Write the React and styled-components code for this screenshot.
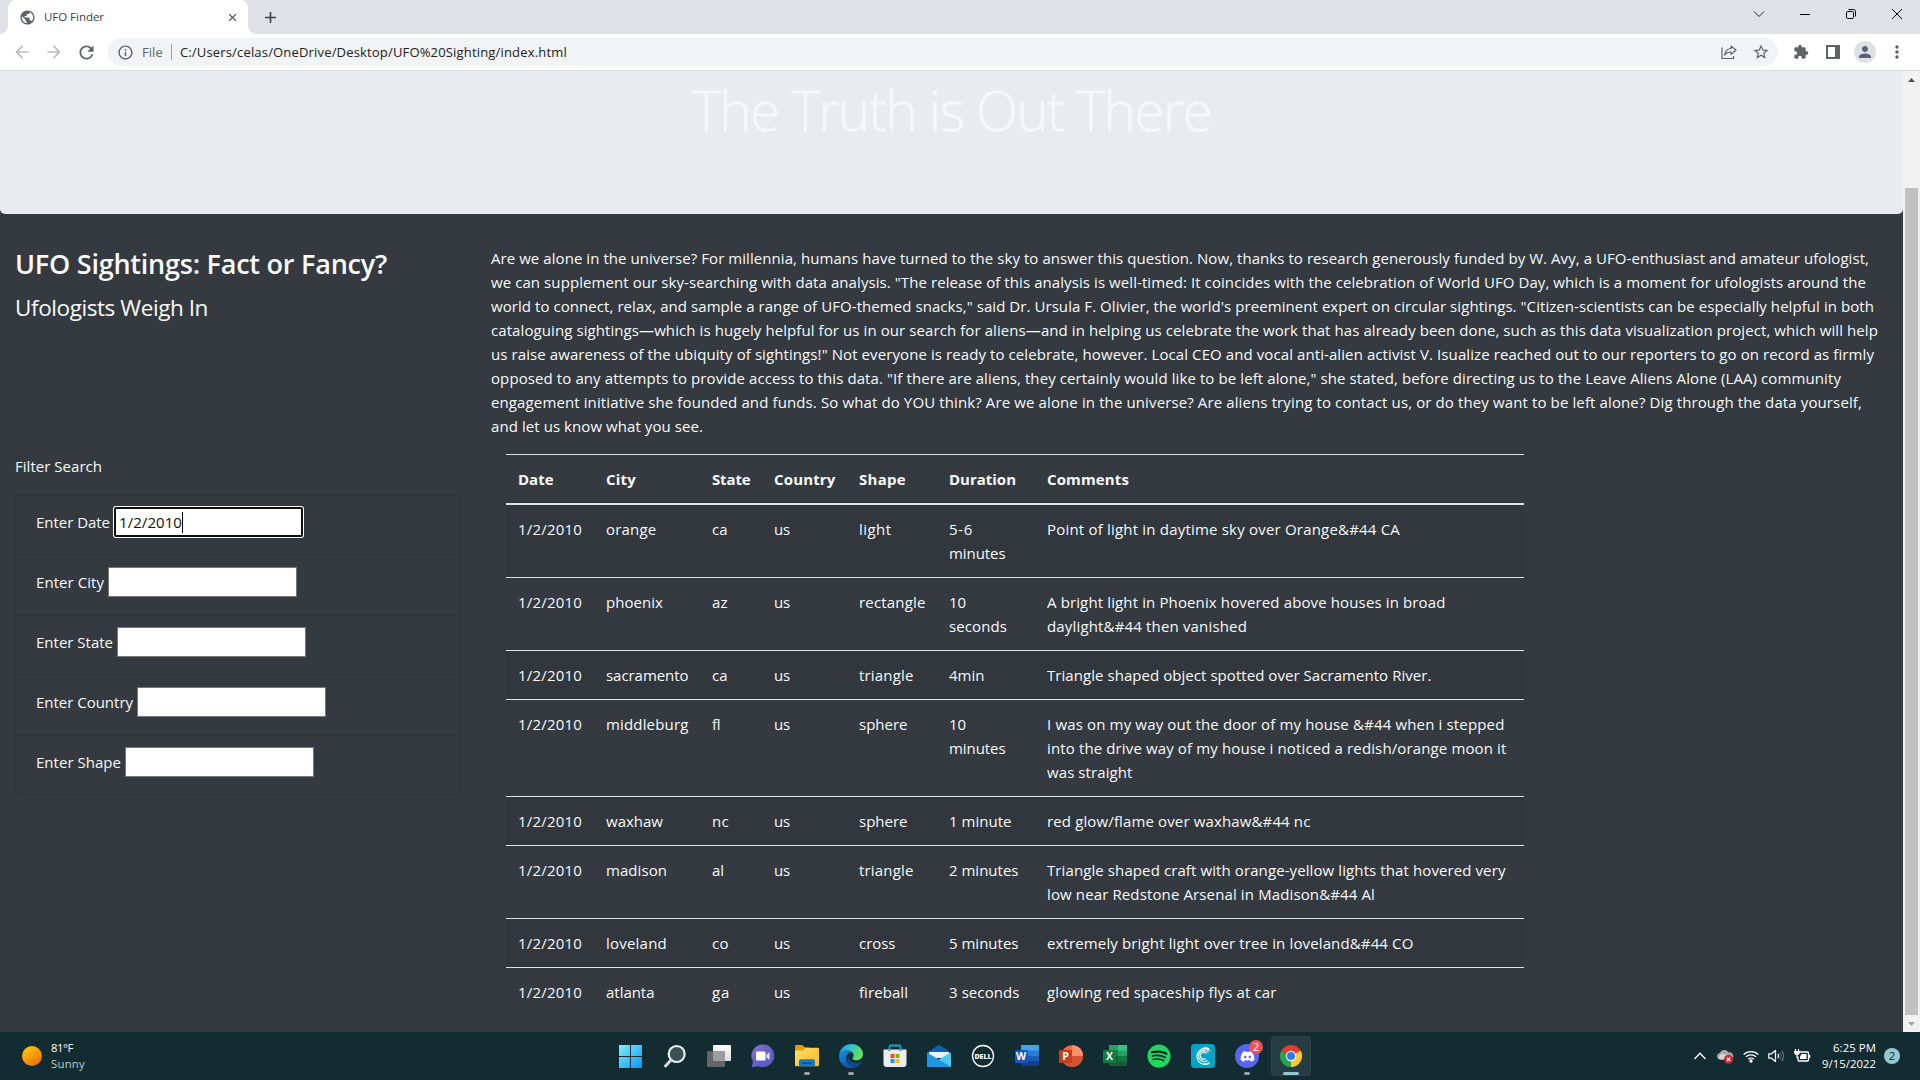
import React, { useLayoutEffect, useRef, useState } from "react";
import styled, { createGlobalStyle, css } from "styled-components";
import {
  MdArrowBack,
  MdArrowForward,
  MdRefresh,
  MdInfoOutline,
  MdStarOutline,
  MdExtension,
  MdPerson,
  MdMoreVert,
  MdPublic,
  MdClose,
  MdAdd,
} from "react-icons/md";
import { FaSpotify, FaDiscord } from "react-icons/fa";

const GlobalStyle = createGlobalStyle`
  * { box-sizing: border-box; }
  html, body { margin: 0; padding: 0; overflow: hidden; }
  body {
    font-family: "Segoe UI", "Open Sans", "Noto Sans", sans-serif;
    font-size: 15px;
    line-height: 24px;
    color: #f8f9fa;
    background: #343a40;
  }
`;

/* ---------- text set to a given measure ---------- */

const Measure = styled.span`
  display: inline-block;
  white-space: nowrap;
`;

function Line({ w, children }) {
  const ref = useRef(null);
  const [spacing, setSpacing] = useState(0);
  useLayoutEffect(() => {
    const natural = ref.current.getBoundingClientRect().width;
    setSpacing((w - natural) / String(children).length);
  }, [w, children]);
  return (
    <Measure ref={ref} style={{ letterSpacing: `${spacing}px` }}>
      {children}
    </Measure>
  );
}

/* ---------- layout shell ---------- */

const Desktop = styled.div`
  width: 1920px;
  height: 1080px;
  display: flex;
  flex-direction: column;
  overflow: hidden;
`;

/* ---------- browser chrome ---------- */

const TabStrip = styled.div`
  height: 34px;
  flex: none;
  display: flex;
  background: #dee1e6;
  padding-left: 8px;
`;

const Tab = styled.div`
  position: relative;
  width: 240px;
  height: 34px;
  display: flex;
  align-items: center;
  padding: 0 9px 0 11px;
  background: #fff;
  border-radius: 8px 8px 0 0;
  color: #3c4043;
  font-size: 11.5px;
  &::before,
  &::after {
    content: "";
    position: absolute;
    bottom: 0;
    width: 8px;
    height: 8px;
  }
  &::before {
    left: -8px;
    background: radial-gradient(circle at 0 0, transparent 7.5px, #fff 8px);
  }
  &::after {
    right: -8px;
    background: radial-gradient(circle at 100% 0, transparent 7.5px, #fff 8px);
  }
  svg {
    flex: none;
  }
`;

const TabTitle = styled.span`
  flex: 1;
  padding-left: 8px;
  line-height: 16px;
`;

const NewTab = styled.div`
  width: 28px;
  margin-left: 8px;
  display: flex;
  align-items: center;
  justify-content: center;
  color: #3c4043;
`;

const WindowControls = styled.div`
  margin-left: auto;
  display: flex;
  height: 28px;
`;

const ControlButton = styled.div`
  width: 46px;
  display: flex;
  align-items: center;
  justify-content: center;
`;

const Toolbar = styled.div`
  height: 37px;
  flex: none;
  display: flex;
  align-items: center;
  background: #fff;
  border-bottom: 1px solid #dadce0;
  color: #5f6368;
`;

const NavButtons = styled.div`
  width: 108px;
  display: flex;
  gap: 12px;
  padding-left: 12px;
`;

const NavButton = styled.span`
  display: flex;
  color: ${(p) => (p.$off ? "#babcbe" : "#5f6368")};
`;

const Omnibox = styled.div`
  width: 1672px;
  height: 28px;
  display: flex;
  align-items: center;
  padding: 0 8px 0 9px;
  background: #f1f3f4;
  border-radius: 14px;
  font-size: 13px;
  line-height: 20px;
`;

const Scheme = styled.span`
  padding-left: 8px;
`;

const Divider = styled.span`
  width: 1px;
  height: 16px;
  margin: 0 8px 0 8px;
  background: #9aa0a6;
`;

const Url = styled.span`
  flex: 1;
  color: #202124;
`;

const OmniboxActions = styled.span`
  display: flex;
  gap: 15px;
  align-items: center;
`;

const ToolbarActions = styled.div`
  flex: 1;
  display: flex;
  align-items: center;
  padding-left: 14px;
`;

const ActionSlot = styled.span`
  width: ${(p) => p.$w || 32}px;
  display: flex;
  justify-content: center;
`;

const Avatar = styled.span`
  width: 22px;
  height: 22px;
  flex: none;
  display: flex;
  align-items: center;
  justify-content: center;
  border-radius: 50%;
  background: #dee1e6;
  color: #55607a;
`;

/* ---------- page ---------- */

const Viewport = styled.div`
  flex: 1;
  min-height: 0;
  display: flex;
`;

const Page = styled.main`
  flex: 1;
  background: #343a40;
  overflow: hidden;
`;

const Jumbotron = styled.header`
  height: 143px;
  padding-top: 5px;
  background: #e9ecef;
  border-radius: 0 0 5px 5px;
  text-align: center;
`;

const Title = styled.h1`
  margin: 0;
  font-size: 55px;
  line-height: 67px;
  font-weight: 300;
  color: #f6f7f8;
  -webkit-text-stroke: 0.5px #f6f7f8;
`;

const Columns = styled.div`
  display: grid;
  grid-template-columns: 446px 1fr;
  column-gap: 30px;
  padding: 32px 15px 0;
`;

const Headline = styled.h3`
  margin: 0 0 8px;
  font-size: 27px;
  line-height: 35px;
  font-weight: 600;
`;

const Subhead = styled.h4`
  margin: 0;
  font-size: 22.5px;
  line-height: 38px;
  font-weight: 400;
`;

const FilterTitle = styled.p`
  margin: 127px 0 16px;
`;

const FilterList = styled.ul`
  margin: 0;
  padding: 0;
  list-style: none;
  border: 1px solid #2f3439;
  border-radius: 4px;
`;

const FilterItem = styled.li`
  height: 60px;
  display: flex;
  gap: 4px;
  padding: 12px 20px;
  & + & {
    border-top: 1px solid #2f3439;
  }
  &:first-child {
    height: 59px;
  }
`;

const FilterLabel = styled.label`
  padding-top: 3px;
`;

const Field = styled.div`
  width: 189px;
  height: 30px;
  display: flex;
  align-items: center;
  padding: 0 4px;
  background: #fff;
  border: 1px solid #767676;
  color: #111;
  ${(p) =>
    p.$focused &&
    css`
      border: 2px solid #101010;
      border-radius: 2px;
      box-shadow: 0 0 0 1px #fff;
      padding: 0 3px;
    `}
`;

const Caret = styled.span`
  width: 1px;
  height: 21px;
  background: #000;
`;

const Article = styled.div`
  height: 208px;
`;

const Table = styled.table`
  width: 1018px;
  margin-left: 15px;
  table-layout: fixed;
  border-collapse: separate;
  border-spacing: 0;
`;

const HeadCell = styled.th`
  width: ${(p) => p.$w}px;
  height: 51px;
  padding: 12px 0 12px 12px;
  border-top: 1px solid #dee2e6;
  border-bottom: 2px solid #dee2e6;
  text-align: left;
  font-weight: 700;
`;

const Row = styled.tr`
  background: ${(p) => (p.$striped ? "rgba(0, 0, 0, 0.05)" : "transparent")};
`;

const Cell = styled.td`
  padding: 12px 0 12px 12px;
  vertical-align: top;
  border-top: ${(p) => (p.$first ? "none" : "1px solid #dee2e6")};
`;

const Scrollbar = styled.div`
  width: 17px;
  display: flex;
  flex-direction: column;
  align-items: center;
  background: #f1f1f1;
`;

const ScrollArrow = styled.span`
  height: 17px;
  display: flex;
  align-items: center;
`;

const ScrollThumb = styled.div`
  width: 13px;
  height: 827px;
  margin-top: 100px;
  background: #c1c1c1;
`;

/* ---------- taskbar ---------- */

const Taskbar = styled.footer`
  height: 48px;
  flex: none;
  display: flex;
  background: #132c32;
  color: #fff;
  font-size: 11.3px;
  line-height: 16px;
`;

const Weather = styled.div`
  width: 609px;
  display: flex;
  align-items: center;
  gap: 9px;
  padding-left: 22px;
`;

const Sun = styled.span`
  width: 20px;
  height: 20px;
  border-radius: 50%;
  background: linear-gradient(145deg, #fdc60b 10%, #f59a0a 50%, #e56a0c 95%);
`;

const Stack = styled.div`
  display: flex;
  flex-direction: column;
  align-items: ${(p) => p.$align || "flex-start"};
`;

const Muted = styled.span`
  color: #c3cbcd;
`;

const Apps = styled.div`
  display: flex;
`;

const AppCell = styled.div`
  position: relative;
  width: 40px;
  height: 40px;
  margin: 4px 2px;
  display: flex;
  align-items: center;
  justify-content: center;
  border-radius: 4px;
  ${(p) =>
    p.$active &&
    css`
      background: #253c42;
      box-shadow: inset 0 0 0 1px #2d444a;
    `}
`;

const Indicator = styled.span`
  position: absolute;
  bottom: 1px;
  left: 50%;
  width: ${(p) => (p.$wide ? 16 : 6)}px;
  height: 3px;
  transform: translateX(-50%);
  border-radius: 2px;
  background: ${(p) => (p.$wide ? "#92c9d2" : "#98a2a5")};
`;

const Badge = styled.span`
  position: absolute;
  top: 4px;
  right: 4px;
  width: 14px;
  height: 14px;
  border-radius: 50%;
  background: #ec5355;
  font-size: 11px;
  line-height: 14px;
  text-align: center;
`;

const Tray = styled.div`
  flex: 1;
  display: flex;
  align-items: center;
  justify-content: flex-end;
  padding-right: 20px;
`;

const TrayIcons = styled.div`
  display: flex;
  align-items: center;
  gap: 9px;
  width: 129px;
`;

const Notice = styled.span`
  width: 16px;
  height: 16px;
  margin-left: 8px;
  border-radius: 50%;
  background: #92c9d0;
  color: #10272c;
  text-align: center;
`;

/* ---------- icons ---------- */

const ShareIcon = () => (
  <svg width="16" height="16" viewBox="0 0 16 16" fill="none" stroke="#5f6368" strokeWidth="1.2">
    <path d="M1 3.5v11h11.5v-2.5" />
    <path d="M10 2l5 4.2-5 4.2V8C7 8 5 9 3.6 11.2 4 7.500 6.500 4.800 10 4.500z" strokeLinejoin="round" />
  </svg>
);

const PanelIcon = () => (
  <svg width="14" height="14" viewBox="0 0 14 14">
    <path fill="#5f6368" fillRule="evenodd" d="M0 0h14v14H0zM2 2v10h7V2z" />
  </svg>
);

const WindowsIcon = () => (
  <svg width="24" height="23" viewBox="0 0 24 23">
    <defs>
      <linearGradient id="win" x1="0" y1="0" x2="23" y2="23" gradientUnits="userSpaceOnUse">
        <stop offset="0" stopColor="#7df0ff" />
        <stop offset="1" stopColor="#0d93f5" />
      </linearGradient>
    </defs>
    <path fill="url(#win)" d="M0 0h11v11H0zM12 0h11v11H12zM0 12h11v11H0zM12 12h11v11H12z" />
  </svg>
);

const SearchIcon = () => (
  <svg width="24" height="24" viewBox="0 0 24 24" fill="none">
    <circle cx="13.700" cy="10" r="8" fill="#3a5157" stroke="#eceeee" strokeWidth="2.200" />
    <path d="M8 16l-5.500 6" stroke="#d5d8d8" strokeWidth="3" strokeLinecap="round" />
  </svg>
);

const TaskViewIcon = () => (
  <svg width="24" height="24" viewBox="0 0 24 24">
    <defs>
      <linearGradient id="tv" x1="0" y1="0" x2="0" y2="1">
        <stop offset="0" stopColor="#fff" />
        <stop offset="1" stopColor="#dcdcdc" />
      </linearGradient>
    </defs>
    <rect x="6" y="1" width="18" height="16" rx="1" fill="url(#tv)" />
    <rect x="0" y="7" width="18" height="16" rx="1" fill="#636566" />
    <path d="M6 7h12v10H6z" fill="#9a9c9d" />
  </svg>
);

const ChatIcon = () => (
  <svg width="24" height="24" viewBox="0 0 24 24">
    <defs>
      <linearGradient id="chat" x1="0" y1="0" x2="1" y2="1">
        <stop offset="0" stopColor="#9a6fc4" />
        <stop offset="0.400" stopColor="#6a65c9" />
        <stop offset="1" stopColor="#5558c8" />
      </linearGradient>
    </defs>
    <path fill="url(#chat)" d="M12 .5a11.300 11.300 0 1 1-4.500 21.700L.8 23.300 2 17.500A11.300 11.300 0 0 1 12 .5z" />
    <rect x="5" y="7.500" width="9.500" height="9" rx="1.200" fill="#fff" />
    <path d="M15.500 10.800l3-2.500v7.600l-3-2.500z" fill="#e6e6f8" />
  </svg>
);

const ExplorerIcon = () => (
  <svg width="24" height="24" viewBox="0 0 24 24">
    <defs>
      <linearGradient id="fold" x1="0" y1="0" x2="1" y2="1">
        <stop offset="0" stopColor="#ffdf70" />
        <stop offset="1" stopColor="#fbb917" />
      </linearGradient>
    </defs>
    <path fill="#e39a06" d="M0 2.200Q0 1 1.200 1h6.300l2.500 2.500h4V8H0z" />
    <path fill="url(#fold)" d="M0 6.500h8L10.500 3.800H23q1 0 1 1V21q0 1.200-1.200 1.200H1.200Q0 22.200 0 21z" />
    <path fill="#1579c8" d="M4 22.200v-5.200q0-1.800 1.800-1.800h12.400q1.800 0 1.800 1.800v5.200z" />
    <rect x="7" y="18.500" width="10" height="1.500" fill="#0a4f94" />
  </svg>
);

const EdgeIcon = () => (
  <svg width="24" height="24" viewBox="0 0 24 24">
    <defs>
      <linearGradient id="edgeTop" x1="0" y1="0" x2="1" y2="0.350">
        <stop offset="0" stopColor="#1b8fd8" />
        <stop offset="0.500" stopColor="#2fc3d0" />
        <stop offset="1" stopColor="#62df52" />
      </linearGradient>
      <linearGradient id="edgeLow" x1="0" y1="0" x2="0.600" y2="1">
        <stop offset="0" stopColor="#1a8de0" />
        <stop offset="1" stopColor="#0f57a8" />
      </linearGradient>
    </defs>
    <path fill="url(#edgeTop)" d="M.2 10.800C1 4.500 6 0 12.200 0 19 0 24 4.800 24 10.300c0 3.800-3 6-6.300 6-2.600 0-4.200-.8-4.200-1.900 0-.7 1.100-1.100 1.100-3.100 0-2.600-2.400-4.800-5.900-4.800C5.200 6.500 1.900 8 .2 10.800z" />
    <path fill="url(#edgeLow)" d="M.2 10.800C1.900 8 5.200 6.500 8.700 6.500c1.700 0 3.300.5 4.400 1.500C9.500 8 7.300 11 7.300 14.200c0 4.500 3.700 8.500 8.300 9.200C7.500 26 -.8 20 .2 10.800z" />
    <path fill="#0c4a92" d="M9.600 11.600c-2.700 5.600 1.700 11.800 6 11.800 3 0 5.600-2.400 7-4.800.3-.6-.2-1-.8-.7-5.500 2.600-12.600.4-12.200-6.300z" />
  </svg>
);

const StoreIcon = () => (
  <svg width="24" height="24" viewBox="0 0 24 24">
    <path d="M6.500 7V3q0-1.500 1.500-1.500h8q1.500 0 1.500 1.500v4" fill="none" stroke="#1b9de2" strokeWidth="1.800" />
    <path d="M.5 5.500h23v14.300q0 3.200-3.200 3.200H3.700Q.5 23 .5 19.800z" fill="#ececec" />
    <path d="M5.600 5.500h1.800v1.500H5.600zM16.600 5.500h1.800v1.500H16.600z" fill="#1584c9" />
    <path d="M7.500 10h4v4h-4z" fill="#f04e23" />
    <path d="M12.500 10h4v4h-4z" fill="#7fba00" />
    <path d="M7.500 15h4v4h-4z" fill="#00a3ee" />
    <path d="M12.500 15h4v4h-4z" fill="#ffb800" />
  </svg>
);

const MailIcon = () => (
  <svg width="24" height="24" viewBox="0 0 24 24">
    <path d="M0 8.500L12 .8l12 7.700z" fill="#0b62b5" />
    <path d="M2 8h20v6H2z" fill="#eef1f4" />
    <path d="M0 8.500l12 7 12-7V23H0z" fill="#1f98e4" />
    <path d="M24 8.500V23L12 15.500z" fill="#50c8f5" />
  </svg>
);

const DellIcon = () => (
  <svg width="24" height="24" viewBox="0 0 24 24">
    <circle cx="12" cy="12" r="10.500" fill="none" stroke="#fff" strokeWidth="1.300" />
    <text x="12" y="14.700" fontFamily="Open Sans, sans-serif" fontWeight="800" fontSize="7.300" textLength="17" lengthAdjust="spacingAndGlyphs" textAnchor="middle" fill="#fff">
      DELL
    </text>
  </svg>
);

const Letter = ({ children, x = 6 }) => (
  <text x={x} y="16" fontFamily="Open Sans, sans-serif" fontWeight="700" fontSize="10.500" textAnchor="middle" fill="#fff">
    {children}
  </text>
);

const WordIcon = () => (
  <svg width="24" height="24" viewBox="0 0 24 24">
    <path d="M6 1h18v6H6z" fill="#41a5ee" />
    <path d="M6 6.500h18V12H6z" fill="#2b7cd3" />
    <path d="M6 12h18v5.500H6z" fill="#185abd" />
    <path d="M6 17h18v5H6z" fill="#103f91" />
    <rect x="0" y="6" width="13" height="13" rx="1" fill="#1a56b4" />
    <Letter>W</Letter>
  </svg>
);

const PowerPointIcon = () => (
  <svg width="24" height="24" viewBox="0 0 24 24">
    <circle cx="13.200" cy="12" r="10.800" fill="#ed6c47" />
    <path d="M13.200 1.200A10.800 10.800 0 0 1 24 12H13.200z" fill="#ff8f6b" />
    <path d="M2.400 12H24a10.800 10.800 0 0 1-21.600 0z" fill="#d35230" />
    <rect x="0" y="6" width="13" height="13" rx="1" fill="#c43e1c" />
    <Letter x={6.500}>P</Letter>
  </svg>
);

const ExcelIcon = () => (
  <svg width="24" height="24" viewBox="0 0 24 24">
    <path d="M6 1h9v6H6z" fill="#21a366" />
    <path d="M15 1h9v6h-9z" fill="#33c481" />
    <path d="M6 6.500h9V12H6z" fill="#107c41" />
    <path d="M15 6.500h9V12h-9z" fill="#21a366" />
    <path d="M6 12h18v10H6z" fill="#185c37" />
    <path d="M15 12h9v5.500h-9z" fill="#107c41" />
    <rect x="0" y="6" width="13" height="13" rx="1" fill="#107c41" />
    <Letter x={6.500}>X</Letter>
  </svg>
);

const Disc = styled.span`
  width: 24px;
  height: 24px;
  display: flex;
  align-items: center;
  justify-content: center;
  border-radius: 50%;
  background: ${(p) => p.$bg};
  color: ${(p) => p.$fg};
`;

const CricutIcon = () => (
  <svg width="24" height="24" viewBox="0 0 24 24" fill="none" stroke="#fff" strokeWidth="1.100">
    <rect width="24" height="24" rx="3.500" fill="#04a4c8" stroke="none" />
    <path d="M19 6.800A7.800 7.800 0 1 0 18.500 18.500" />
    <path d="M18.200 5A7.500 7.500 0 0 0 12 4.300M17.500 8.500A5.600 5.600 0 1 0 16.500 16.500" />
    <path d="M15.500 9.500A3.500 3.500 0 1 0 14.500 14.800M17.500 20H12" />
  </svg>
);

const ChromeIcon = () => (
  <svg width="22" height="22" viewBox="0 0 22 22">
    <path d="M11 11L1.470 5.500A11 11 0 0 1 20.530 5.500z" fill="#e33b2e" />
    <path d="M11 11L11 22A11 11 0 0 1 1.470 5.500z" fill="#2ba24c" />
    <path d="M11 11L20.530 5.500A11 11 0 0 1 11 22z" fill="#fcc934" />
    <path d="M11 6h9.800l-.3-.5H11zM6.700 13.500L1.500 5.500l-.3.600z" fill="#e33b2e" />
    <path d="M11 22l4.400-8.500L11 16z" fill="#fcc934" />
    <circle cx="11" cy="11" r="5.200" fill="#fff" />
    <circle cx="11" cy="11" r="4.100" fill="#2b7de9" />
  </svg>
);

const ChevronUpIcon = () => (
  <svg width="14" height="16" viewBox="0 0 14 16" fill="none" stroke="#fff" strokeWidth="1.300">
    <path d="M1.500 11L7 5.300 12.500 11" />
  </svg>
);

const CloudErrorIcon = () => (
  <svg width="18" height="16" viewBox="0 0 18 16">
    <path d="M4 11.500a3.300 3.300 0 0 1-.3-6.500A5 5 0 0 1 12.500 4.500a3.500 3.500 0 0 1 2 7z" fill="#a8abac" />
    <path d="M4 11.500a3.300 3.300 0 0 1 2-5.500l7 1v4.500z" fill="#d5d7d8" />
    <circle cx="12.500" cy="11.300" r="4.500" fill="#d8232e" />
    <path d="M10.800 9.600l3.400 3.400m0-3.400L10.800 13" stroke="#fff" strokeWidth="1.300" />
  </svg>
);

const WifiIcon = () => (
  <svg width="16" height="16" viewBox="0 0 16 16" fill="none" stroke="#fff" strokeWidth="1.300">
    <path d="M.6 6.600a10.500 10.500 0 0 1 14.800 0M2.900 8.900a7.200 7.200 0 0 1 10.200 0M5.200 11.200a4 4 0 0 1 5.600 0" />
    <circle cx="8" cy="13" r="1" fill="#fff" />
  </svg>
);

const VolumeIcon = () => (
  <svg width="17" height="16" viewBox="0 0 17 16" fill="none" strokeWidth="1.200">
    <path d="M.8 5.800h2.700L7.500 2.500v11L3.500 10.200H.8z" stroke="#fff" strokeLinejoin="round" />
    <path d="M9.700 6a3 3 0 0 1 0 4" stroke="#fff" />
    <path d="M11.700 4.300a5.500 5.500 0 0 1 0 7.400M13.700 2.700a8 8 0 0 1 0 10.600" stroke="#5d7176" />
  </svg>
);

const BatteryIcon = () => (
  <svg width="17" height="16" viewBox="0 0 17 16" fill="none" stroke="#fff">
    <path d="M6 4h7.500q1 0 1 1v7q0 1-1 1H5q-1 0-1-1V8.500" strokeWidth="1.300" />
    <path d="M7.500 6H12.500v5H6V8.500z" fill="#fff" stroke="none" />
    <path d="M15.500 7v3" strokeWidth="1.500" />
    <path d="M1.500 1v2M4.500 1v2M3 6v4" strokeWidth="1.200" />
    <path d="M0 3h6v2L4.500 7h-3L0 5z" fill="#fff" stroke="none" />
  </svg>
);

/* ---------- data ---------- */

const article = [
  ["Are we alone in the universe? For millennia, humans have turned to the sky to answer this question. Now, thanks to research generously funded by W. Avy, a UFO-enthusiast and amateur ufologist,", 1378],
  ["we can supplement our sky-searching with data analysis. \"The release of this analysis is well-timed: It coincides with the celebration of World UFO Day, which is a moment for ufologists around the", 1375],
  ["world to connect, relax, and sample a range of UFO-themed snacks,\" said Dr. Ursula F. Olivier, the world's preeminent expert on circular sightings. \"Citizen-scientists can be especially helpful in both", 1383],
  ["cataloguing sightings—which is hugely helpful for us in our search for aliens—and in helping us celebrate the work that has already been done, such as this data visualization project, which will help", 1387],
  ["us raise awareness of the ubiquity of sightings!\" Not everyone is ready to celebrate, however. Local CEO and vocal anti-alien activist V. Isualize reached out to our reporters to go on record as firmly", 1383],
  ["opposed to any attempts to provide access to this data. \"If there are aliens, they certainly would like to be left alone,\" she stated, before directing us to the Leave Aliens Alone (LAA) community", 1350],
  ["engagement initiative she founded and funds. So what do YOU think? Are we alone in the universe? Are aliens trying to contact us, or do they want to be left alone? Dig through the data yourself,", 1371],
  ["and let us know what you see.", 212],
];

const filters = [
  ["Enter Date", 74, "1/2/2010"],
  ["Enter City", 68],
  ["Enter State", 77],
  ["Enter Country", 97],
  ["Enter Shape", 85],
];

const columns = [
  ["Date", 88, 35.5],
  ["City", 106, 30],
  ["State", 62, 38.5],
  ["Country", 85, 61.5],
  ["Shape", 90, 47],
  ["Duration", 98, 67],
  ["Comments", 489, 82],
];

const sightings = [
  [["orange", 50.5], "ca", ["light", 32.5], [["5-6", 24], ["minutes", 56.5]], [["Point of light in daytime sky over Orange&#44 CA", 353]]],
  [["phoenix", 57], "az", ["rectangle", 66.5], [["10", 17], ["seconds", 58]], [["A bright light in Phoenix hovered above houses in broad", 398.5], ["daylight&#44 then vanished", 200]]],
  [["sacramento", 82.5], "ca", ["triangle", 54.5], [["4min", 35.5]], [["Triangle shaped object spotted over Sacramento River.", 384.5]]],
  [["middleburg", 82.5], "fl", ["sphere", 48.5], [["10", 17], ["minutes", 56.5]], [["I was on my way out the door of my house &#44 when i stepped", 457.5], ["into the drive way of my house i noticed a redish/orange moon it", 459.5], ["was straight", 85.5]]],
  [["waxhaw", 57], "nc", ["sphere", 48.5], [["1 minute", 62.5]], [["red glow/flame over waxhaw&#44 nc", 263.5]]],
  [["madison", 61], "al", ["triangle", 54.5], [["2 minutes", 69.5]], [["Triangle shaped craft with orange-yellow lights that hovered very", 458.5], ["low near Redstone Arsenal in Madison&#44 Al", 328]]],
  [["loveland", 61], "co", ["cross", 36.5], [["5 minutes", 69.5]], [["extremely bright light over tree in loveland&#44 CO", 366.5]]],
  [["atlanta", 48.5], "ga", ["fireball", 49], [["3 seconds", 70.5]], [["glowing red spaceship flys at car", 229.5]]],
];

const stateWidths = { ca: 15.5, az: 15.5, fl: 8.5, nc: 17, al: 12, co: 17, ga: 18 };

const apps = [
  [<WindowsIcon />],
  [<SearchIcon />],
  [<TaskViewIcon />],
  [<ChatIcon />],
  [<ExplorerIcon />, "dot"],
  [<EdgeIcon />, "dot"],
  [<StoreIcon />],
  [<MailIcon />],
  [<DellIcon />],
  [<WordIcon />],
  [<PowerPointIcon />],
  [<ExcelIcon />],
  [<Disc $bg="#0f1f22" $fg="#1ed760"><FaSpotify size={24} /></Disc>],
  [<CricutIcon />],
  [<Disc $bg="#5865f2" $fg="#fff"><FaDiscord size={15} /></Disc>, "dot", 2],
  [<ChromeIcon />, "active"],
];

/* ---------- sections ---------- */

function BrowserChrome() {
  return (
    <>
      <TabStrip>
        <Tab>
          <MdPublic size={17} color="#5f6368" />
          <TabTitle><Line w={60}>UFO Finder</Line></TabTitle>
          <MdClose size={13} />
        </Tab>
        <NewTab><MdAdd size={19} /></NewTab>
        <WindowControls>
          <ControlButton>
            <svg width="12" height="8" viewBox="0 0 12 8" fill="none" stroke="#222"><path d="M1 1.500l5 5 5-5" /></svg>
          </ControlButton>
          <ControlButton>
            <svg width="10" height="1" viewBox="0 0 10 1"><path d="M0 0h10v1H0z" /></svg>
          </ControlButton>
          <ControlButton>
            <svg width="10" height="10" viewBox="0 0 10 10" fill="none" stroke="#000">
              <rect x=".5" y="2.500" width="7" height="7" rx="1.200" />
              <path d="M2.500.5H7.500q2 0 2 2V7.500" />
            </svg>
          </ControlButton>
          <ControlButton>
            <svg width="10" height="10" viewBox="0 0 10 10" stroke="#000"><path d="M0 0l10 10M10 0L0 10" /></svg>
          </ControlButton>
        </WindowControls>
      </TabStrip>
      <Toolbar>
        <NavButtons>
          <NavButton $off><MdArrowBack size={20} /></NavButton>
          <NavButton $off><MdArrowForward size={20} /></NavButton>
          <NavButton><MdRefresh size={21} /></NavButton>
        </NavButtons>
        <Omnibox>
          <MdInfoOutline size={17} />
          <Scheme><Line w={21}>File</Line></Scheme>
          <Divider />
          <Url><Line w={387}>C:/Users/celas/OneDrive/Desktop/UFO%20Sighting/index.html</Line></Url>
          <OmniboxActions>
            <ShareIcon />
            <MdStarOutline size={18} />
          </OmniboxActions>
        </Omnibox>
        <ToolbarActions>
          <ActionSlot $w={18}><MdExtension size={16} /></ActionSlot>
          <ActionSlot $w={46}><PanelIcon /></ActionSlot>
          <ActionSlot $w={18}><Avatar><MdPerson size={18} /></Avatar></ActionSlot>
          <ActionSlot $w={46}><MdMoreVert size={20} /></ActionSlot>
        </ToolbarActions>
      </Toolbar>
    </>
  );
}

function Filters() {
  return (
    <div>
      <Headline><Line w={372}>UFO Sightings: Fact or Fancy?</Line></Headline>
      <Subhead><Line w={193}>Ufologists Weigh In</Line></Subhead>
      <FilterTitle><Line w={87}>Filter Search</Line></FilterTitle>
      <FilterList>
        {filters.map(([label, w, value]) => (
          <FilterItem key={label}>
            <FilterLabel><Line w={w}>{label}</Line></FilterLabel>
            <Field $focused={!!value}>
              {value && <Line w={63}>{value}</Line>}
              {value && <Caret />}
            </Field>
          </FilterItem>
        ))}
      </FilterList>
    </div>
  );
}

function Sightings() {
  return (
    <Table>
      <thead>
        <tr>
          {columns.map(([name, w, textWidth]) => (
            <HeadCell key={name} $w={w}><Line w={textWidth}>{name}</Line></HeadCell>
          ))}
        </tr>
      </thead>
      <tbody>
        {sightings.map(([city, state, shape, duration, comment], i) => {
          const first = i === 0;
          return (
            <Row key={city[0]} $striped={i % 2 === 0}>
              <Cell $first={first}><Line w={64}>1/2/2010</Line></Cell>
              <Cell $first={first}><Line w={city[1]}>{city[0]}</Line></Cell>
              <Cell $first={first}><Line w={stateWidths[state]}>{state}</Line></Cell>
              <Cell $first={first}><Line w={16}>us</Line></Cell>
              <Cell $first={first}><Line w={shape[1]}>{shape[0]}</Line></Cell>
              <Cell $first={first}>
                <Stack>{duration.map(([t, w]) => <Line key={t} w={w}>{t}</Line>)}</Stack>
              </Cell>
              <Cell $first={first}>
                <Stack>{comment.map(([t, w]) => <Line key={t} w={w}>{t}</Line>)}</Stack>
              </Cell>
            </Row>
          );
        })}
      </tbody>
    </Table>
  );
}

export default function App() {
  return (
    <Desktop>
      <GlobalStyle />
      <BrowserChrome />
      <Viewport>
        <Page>
          <Jumbotron>
            <Title><Line w={519}>The Truth is Out There</Line></Title>
          </Jumbotron>
          <Columns>
            <Filters />
            <div>
              <Article>
                <Stack>{article.map(([t, w]) => <Line key={t} w={w}>{t}</Line>)}</Stack>
              </Article>
              <Sightings />
            </div>
          </Columns>
        </Page>
        <Scrollbar>
          <ScrollArrow>
            <svg width="7" height="4" viewBox="0 0 7 4"><path d="M0 4L3.500 0 7 4z" fill="#505050" /></svg>
          </ScrollArrow>
          <ScrollThumb />
          <ScrollArrow>
            <svg width="7" height="4" viewBox="0 0 7 4"><path d="M0 0l3.500 4L7 0z" fill="#a3a3a3" /></svg>
          </ScrollArrow>
        </Scrollbar>
      </Viewport>
      <Taskbar>
        <Weather>
          <Sun />
          <Stack>
            <Line w={22}>81°F</Line>
            <Muted><Line w={34}>Sunny</Line></Muted>
          </Stack>
        </Weather>
        <Apps>
          {apps.map(([icon, state, count], i) => (
            <AppCell key={i} $active={state === "active"}>
              {icon}
              {state && <Indicator $wide={state === "active"} />}
              {count && <Badge>{count}</Badge>}
            </AppCell>
          ))}
        </Apps>
        <Tray>
          <TrayIcons>
            <ChevronUpIcon />
            <CloudErrorIcon />
            <WifiIcon />
            <VolumeIcon />
            <BatteryIcon />
          </TrayIcons>
          <Stack $align="flex-end">
            <Line w={43}>6:25 PM</Line>
            <Line w={54}>9/15/2022</Line>
          </Stack>
          <Notice>2</Notice>
        </Tray>
      </Taskbar>
    </Desktop>
  );
}
